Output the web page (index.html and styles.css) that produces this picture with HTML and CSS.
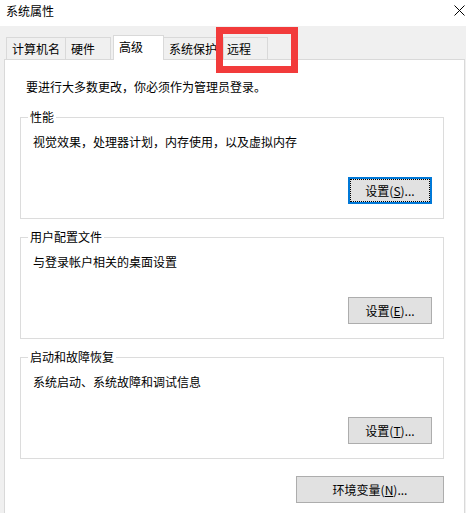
FILE: index.html
```html
<!DOCTYPE html>
<html lang="zh-CN">
<head>
<meta charset="utf-8">
<title>系统属性</title>
<link rel="stylesheet" href="styles.css">
</head>
<body>
<div class="window">
  <header class="titlebar">
    <span class="title">系统属性</span>
    <svg class="close" width="11" height="11" viewBox="0 0 11 11" aria-hidden="true">
      <path d="M0.5 0.5 L10.5 10.5 M10.5 0.5 L0.5 10.5" stroke="#000" stroke-width="1" fill="none"/>
    </svg>
  </header>
  <nav class="tabs">
    <div class="tab tab-name">计算机名</div>
    <div class="tab tab-hw">硬件</div>
    <div class="tab tab-adv active">高级</div>
    <div class="tab tab-prot">系统保护</div>
    <div class="tab tab-remote">远程</div>
  </nav>
  <main class="panel">
    <p class="intro">要进行大多数更改，你必须作为管理员登录。</p>
    <fieldset class="group">
      <legend>性能</legend>
      <p class="desc">视觉效果，处理器计划，内存使用，以及虚拟内存</p>
      <div class="actions"><button class="btn focused">设置(<u>S</u>)...</button></div>
    </fieldset>
    <fieldset class="group">
      <legend>用户配置文件</legend>
      <p class="desc">与登录帐户相关的桌面设置</p>
      <div class="actions"><button class="btn">设置(<u>E</u>)...</button></div>
    </fieldset>
    <fieldset class="group">
      <legend>启动和故障恢复</legend>
      <p class="desc">系统启动、系统故障和调试信息</p>
      <div class="actions"><button class="btn">设置(<u>T</u>)...</button></div>
    </fieldset>
    <div class="footer"><button class="btn wide">环境变量(<u>N</u>)...</button></div>
  </main>
  <div class="highlight"></div>
</div>
</body>
</html>
```
FILE: styles.css
```css
* { box-sizing: border-box; }
html, body {
  margin: 0;
  padding: 0;
}
body {
  width: 466px;
  height: 513px;
  overflow: hidden;
  background: #f0f0f0;
  font-family: "Noto Sans CJK SC", "Noto Sans", sans-serif;
  font-size: 12px;
  color: #000;
}
.window {
  position: relative;
  width: 466px;
  height: 513px;
  overflow: hidden;
}
.titlebar {
  height: 26px;
  background: #fff;
  display: flex;
  justify-content: space-between;
  align-items: flex-start;
  padding: 0 1px 0 6px;
}
.title {
  line-height: 22px;
}
.close {
  margin-top: 5px;
}
.tabs {
  height: 33px;
  display: flex;
  align-items: flex-end;
  padding-left: 6px;
}
.tab {
  height: 22px;
  line-height: 21px;
  border: 1px solid #d9d9d9;
  border-bottom: none;
  background: #f0f0f0;
  padding-left: 5px;
  white-space: nowrap;
}
.tab-name { width: 60px; }
.tab-hw { width: 46px; margin-left: -1px; }
.tab-adv { width: 51px; margin-left: 2px; }
.tab-prot { width: 61px; margin-left: -1px; overflow: hidden; }
.tab-remote { width: 45px; margin-left: -1px; padding-left: 3px; }
.tab.active {
  position: relative;
  z-index: 1;
  height: 25px;
  margin-bottom: -1px;
  padding-bottom: 3px;
  background: #fff;
}
.panel {
  margin-left: 4px;
  width: 461px;
  background: #fff;
  border: 1px solid #d9d9d9;
  padding: 0 0 40px 15px;
}
.intro {
  margin: 19px 0 0 6px;
  line-height: 16px;
}
.group {
  width: 424px;
  margin: 14px 0 0 0;
  padding: 0 11px 14px 6px;
  border: 1px solid #dcdcdc;
}
.group + .group {
  margin-top: 10px;
}
.group legend {
  margin-left: 1px;
  padding: 0 2px;
  line-height: 16px;
}
.desc {
  margin: 9px 0 0 6px;
  line-height: 16px;
}
.actions {
  display: flex;
  justify-content: flex-end;
  margin-top: 27px;
}
.btn {
  width: 84px;
  height: 27px;
  padding: 0;
  background: #e1e1e1;
  border: 1px solid #adadad;
  border-radius: 0;
  font-family: inherit;
  font-size: 12px;
  color: #000;
  line-height: 16px;
}
.btn.focused {
  border: 2px solid #0078d7;
  outline: 1px dotted #000;
  outline-offset: -3px;
}
.footer {
  width: 424px;
  display: flex;
  justify-content: flex-end;
  margin-top: 17px;
}
.btn.wide {
  width: 148px;
}
.highlight {
  position: absolute;
  left: 216px;
  top: 27px;
  width: 82px;
  height: 46px;
  border: 7px solid #f23b3b;
  z-index: 2;
}
```
